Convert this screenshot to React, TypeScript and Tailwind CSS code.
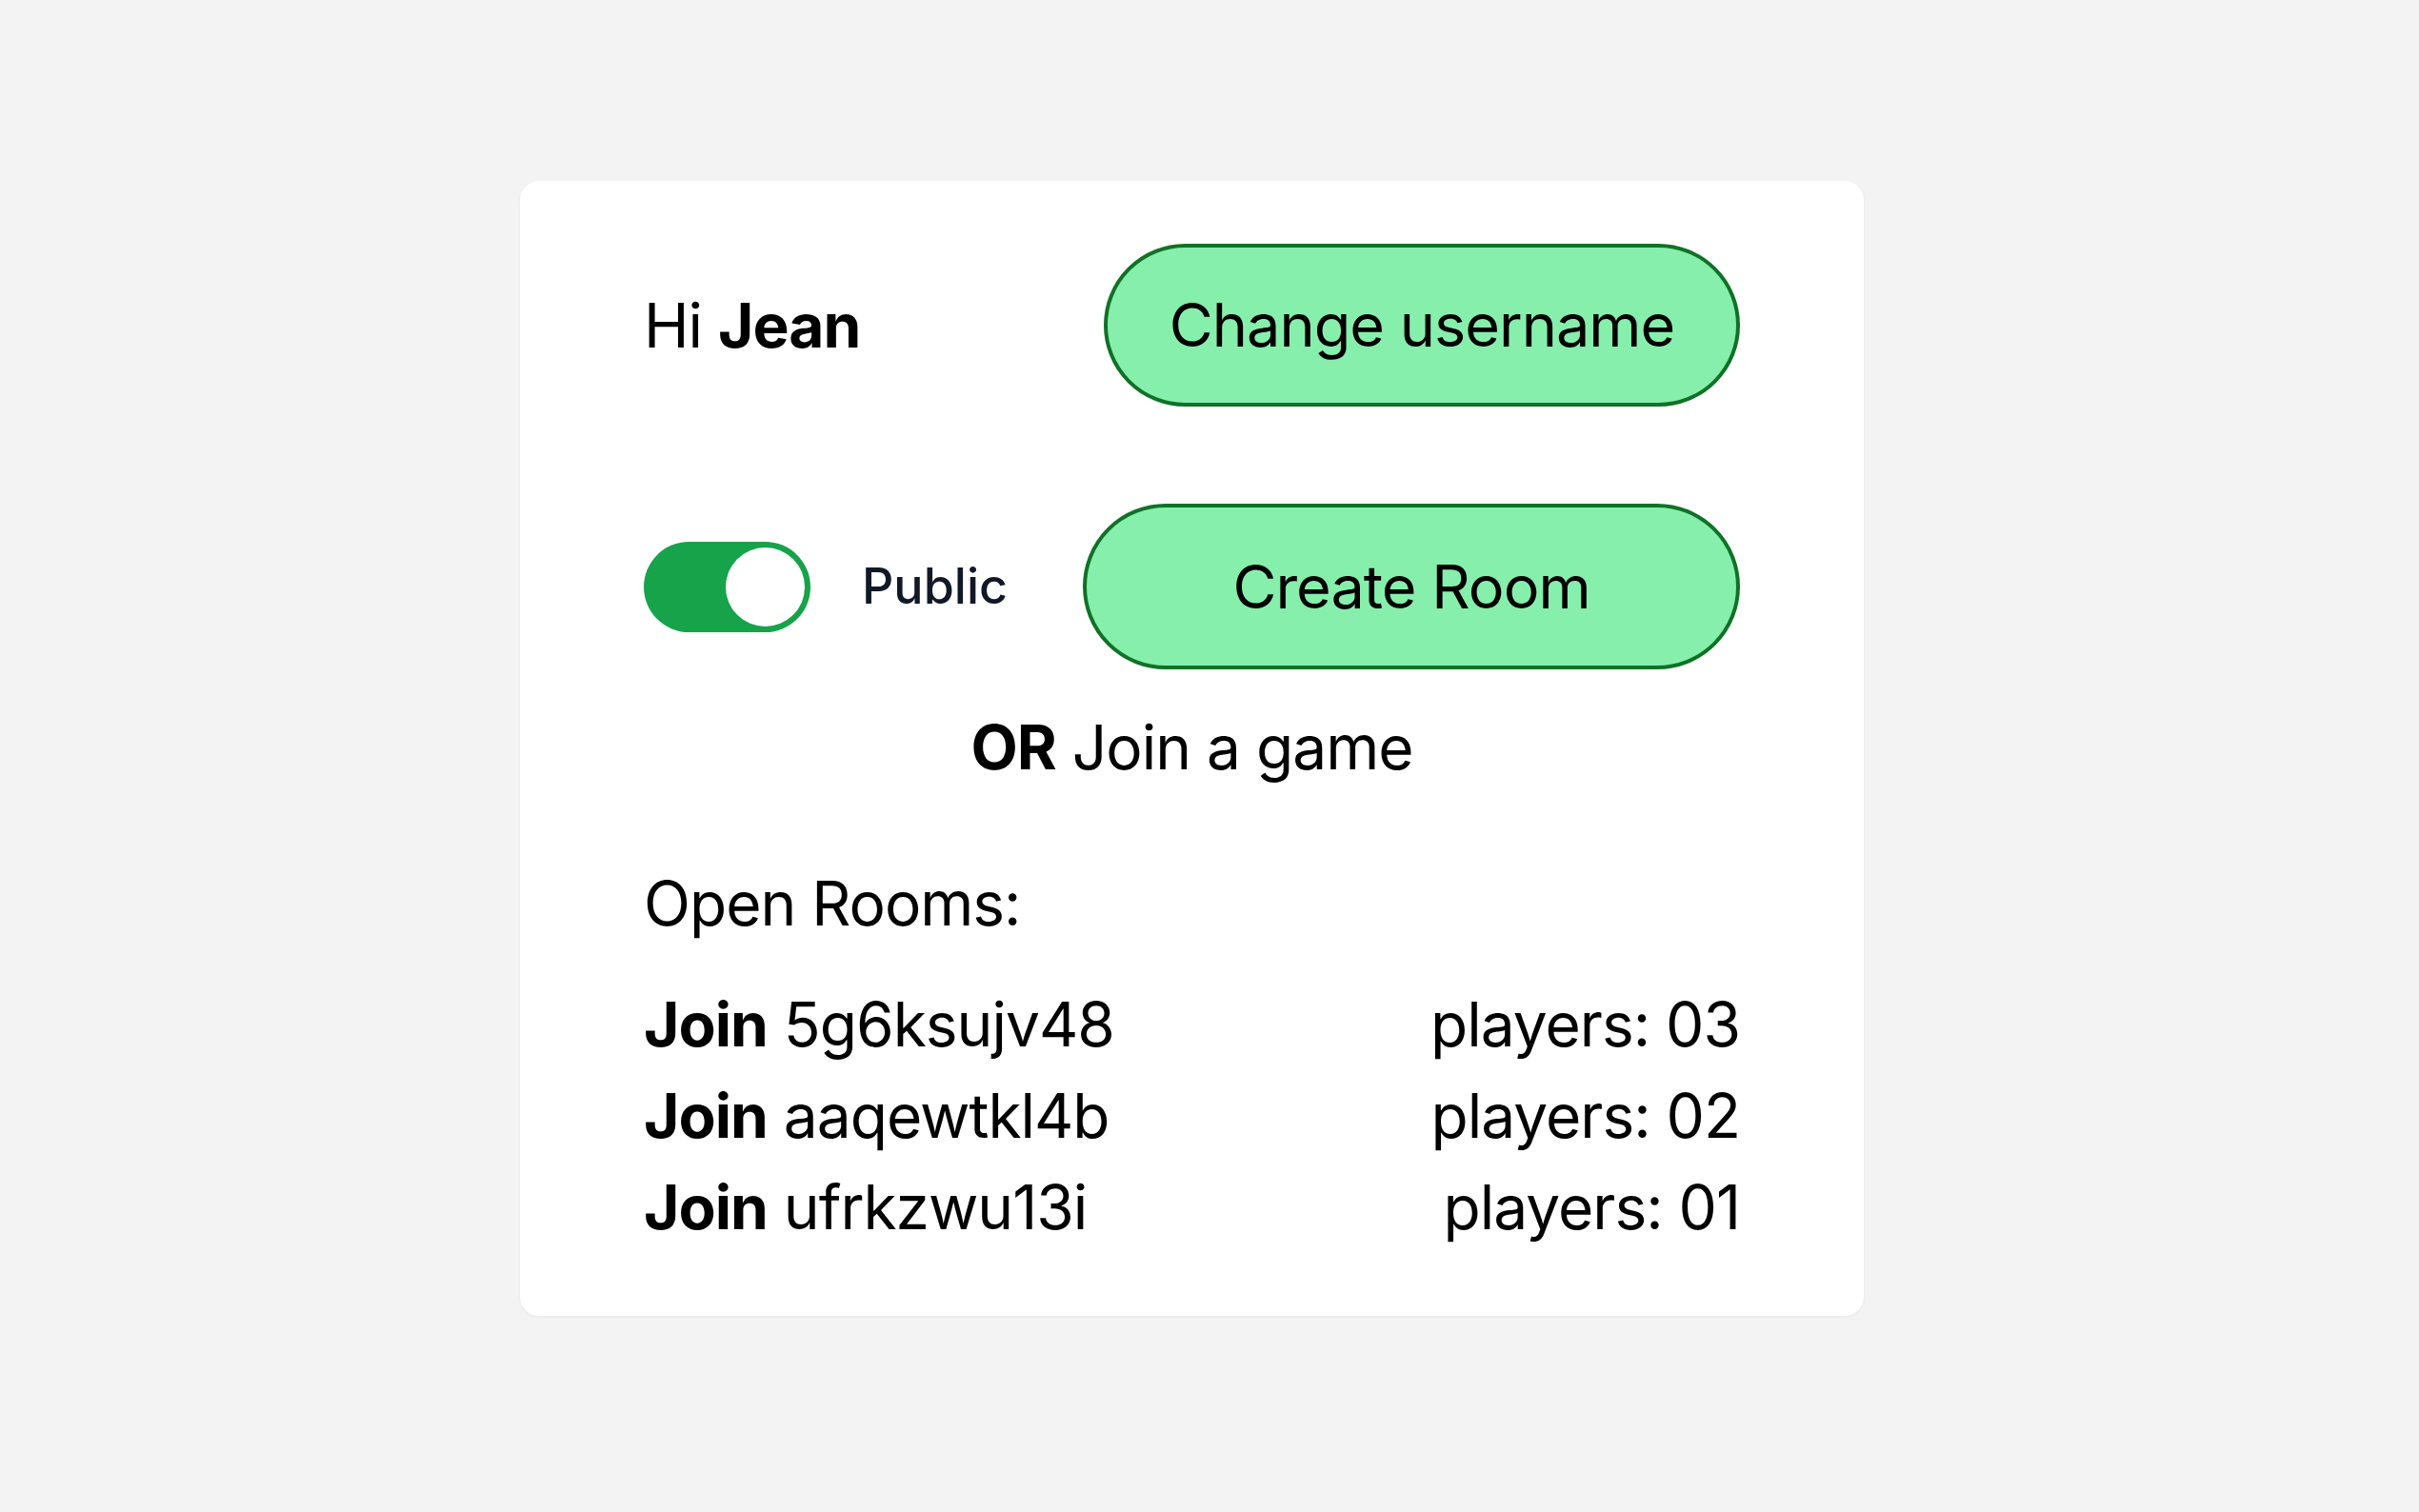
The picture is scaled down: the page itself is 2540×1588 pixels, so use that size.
const rooms = [
  { id: "5g6ksujv48", players: "03" },
  { id: "aaqewtkl4b", players: "02" },
  { id: "ufrkzwu13i", players: "01" },
]

function Toggle() {
  return (
    <div className="flex h-[95px] w-[175px] items-center justify-end rounded-full bg-[#16a34a] p-[6px]">
      <div className="h-[83px] w-[83px] rounded-full bg-white" />
    </div>
  )
}

export default function App() {
  return (
    <div
      className="flex min-h-screen justify-center bg-[#f3f3f3] pt-[190px] pr-[37px] text-black"
      style={{ fontFamily: "Inter, 'Noto Sans', sans-serif" }}
    >
      <div className="h-fit w-[1411px] rounded-[20px] bg-white px-[130px] pt-[66px] pb-[66px] tracking-[-1px] shadow-[0_1px_3px_rgba(0,0,0,0.06)]">
        <div className="flex items-center justify-between">
          <p className="text-[64px] leading-[1.5]">
            Hi <span className="font-bold">Jean</span>
          </p>
          <button className="h-[171px] w-[668px] rounded-full border-[4px] border-[#0f7226] bg-[#86efac] text-[63px] leading-[1.5] tracking-[-1px]">
            Change username
          </button>
        </div>

        <div className="mt-[102px] flex items-center justify-between">
          <div className="flex items-center gap-[54px]">
            <Toggle />
            <span className="text-[52px] font-medium tracking-normal text-[#111827]">Public</span>
          </div>
          <button className="h-[174px] w-[690px] rounded-full border-[4px] border-[#0f7226] bg-[#86efac] text-[63px] leading-[1.5] tracking-[-1px]">
            Create Room
          </button>
        </div>

        <p className="mt-[34px] text-center text-[64px] leading-[1.5]">
          <span className="font-bold">OR</span> Join a game
        </p>

        <p className="mt-[68px] text-[64px] leading-[1.5]">Open Rooms:</p>

        <ul className="mt-[31px]">
          {rooms.map((room) => (
            <li key={room.id} className="flex justify-between text-[64px] leading-[1.5]">
              <span>
                <span className="font-bold">Join</span> {room.id}
              </span>
              <span>players: {room.players}</span>
            </li>
          ))}
        </ul>
      </div>
    </div>
  )
}
